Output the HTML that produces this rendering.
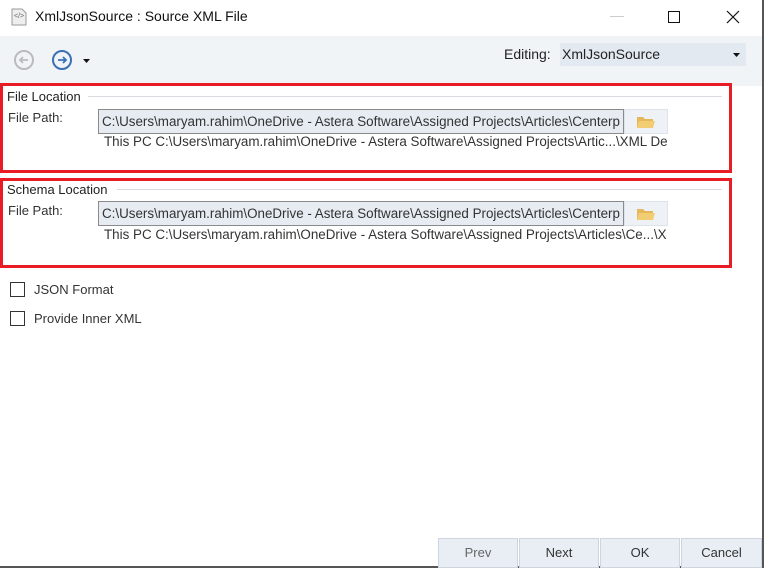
<!DOCTYPE html>
<html><head><style>
*{margin:0;padding:0;box-sizing:border-box}
body{width:764px;height:568px;background:#fff;font-family:"Liberation Sans",sans-serif;font-size:12px;color:#222;position:relative;overflow:hidden}
.a{position:absolute}
.red{position:absolute;border:3px solid #e81c24}
.tb{position:absolute;left:98px;width:526px;height:25px;background:#e6ecf2;border:1px solid #8a8a8a;font-size:13.4px;line-height:23px;padding-left:3px;white-space:nowrap;overflow:hidden;color:#333}
.fb{position:absolute;left:624px;width:44px;height:25px;background:#eef2f6;border:1px solid #dde3ea}
.btn{position:absolute;top:538px;height:30px;width:80px;background:#e8eef4;border:1px solid #cdd5de;text-align:center;line-height:28px;font-size:13px;color:#333}
.cb{position:absolute;left:10px;width:15px;height:15px;border:1px solid #333;background:#fff}
.grp{position:absolute;height:1px;background:#d8dce0}
.sub{position:absolute;left:104px;font-size:13.4px;color:#333;white-space:nowrap}
</style></head><body>
<svg class="a" style="left:11px;top:8px" width="16" height="18"><path d="M1 1h10l4 4v12H1z" fill="#eee" stroke="#999"/><text x="3" y="10" font-size="7" fill="#666">&lt;/&gt;</text></svg>
<div class="a" style="left:35px;top:8px;font-size:14px;color:#111">XmlJsonSource : Source XML File</div>
<div class="a" style="left:610px;top:16px;width:14px;height:1px;background:#ccc"></div>
<div class="a" style="left:668px;top:11px;width:12px;height:12px;border:1px solid #111"></div>
<svg class="a" style="left:726px;top:10px" width="14" height="14"><path d="M1 1L13 13M13 1L1 13" stroke="#111" stroke-width="1.2"/></svg>
<div class="a" style="left:0;top:36px;width:762px;height:50px;background:#f1f4f7"></div>
<svg class="a" style="left:13px;top:49px" width="22" height="22"><circle cx="11" cy="11" r="9" fill="none" stroke="#bbb" stroke-width="2"/><path d="M15 11H7M10 8l-3 3 3 3" fill="none" stroke="#bbb" stroke-width="1.8"/></svg>
<svg class="a" style="left:51px;top:49px" width="22" height="22"><circle cx="11" cy="11" r="9" fill="none" stroke="#3a6fb5" stroke-width="2"/><path d="M7 11h8M12 8l3 3-3 3" fill="none" stroke="#3a6fb5" stroke-width="1.8"/></svg>
<svg class="a" style="left:83px;top:59px" width="7" height="4"><path d="M0 0h7L3.5 4z" fill="#111"/></svg>
<div class="a" style="left:504px;top:46px;font-size:14px;color:#222">Editing:</div>
<div class="a" style="left:560px;top:43px;width:186px;height:23px;background:#e3e9f0"></div>
<div class="a" style="left:562px;top:46px;font-size:14px;color:#222">XmlJsonSource</div>
<svg class="a" style="left:733px;top:53px" width="7" height="4"><path d="M0 0h7L3.5 4z" fill="#111"/></svg>
<div class="a" style="left:762px;top:0;width:2px;height:568px;background:#555"></div>
<div class="a" style="left:0;top:566px;width:764px;height:2px;background:#555"></div>
<div class="grp" style="left:88px;top:96px;width:634px"></div>
<div class="a" style="left:7px;top:89px;font-size:13px;color:#222">File Location</div>
<div class="a" style="left:8px;top:110px;font-size:13px;color:#333">File Path:</div>
<div class="tb" style="top:109px">C:\Users\maryam.rahim\OneDrive - Astera Software\Assigned Projects\Articles\Centerp</div>
<div class="fb" style="top:109px"></div>
<svg class="a" style="left:636px;top:115px" width="20" height="14"><path d="M1 2h6l2 2h8v9H1z" fill="#e6b85c"/><path d="M3 6h16l-2 7H1z" fill="#f3cd74"/></svg>
<div class="sub" style="top:134px">This PC C:\Users\maryam.rahim\OneDrive - Astera Software\Assigned Projects\Artic...\XML De</div>
<div class="red" style="left:0;top:83px;width:732px;height:90px"></div>
<div class="grp" style="left:117px;top:189px;width:605px"></div>
<div class="a" style="left:7px;top:182px;font-size:13px;color:#222">Schema Location</div>
<div class="a" style="left:8px;top:203px;font-size:13px;color:#333">File Path:</div>
<div class="tb" style="top:201px">C:\Users\maryam.rahim\OneDrive - Astera Software\Assigned Projects\Articles\Centerp</div>
<div class="fb" style="top:201px"></div>
<svg class="a" style="left:636px;top:207px" width="20" height="14"><path d="M1 2h6l2 2h8v9H1z" fill="#e6b85c"/><path d="M3 6h16l-2 7H1z" fill="#f3cd74"/></svg>
<div class="sub" style="top:227px">This PC C:\Users\maryam.rahim\OneDrive - Astera Software\Assigned Projects\Articles\Ce...\X</div>
<div class="red" style="left:0;top:178px;width:732px;height:90px"></div>
<div class="cb" style="top:282px"></div>
<div class="a" style="left:34px;top:282px;font-size:13px;color:#333">JSON Format</div>
<div class="cb" style="top:311px"></div>
<div class="a" style="left:34px;top:311px;font-size:13px;color:#333">Provide Inner XML</div>
<div class="btn" style="left:438px;color:#666">Prev</div>
<div class="btn" style="left:519px">Next</div>
<div class="btn" style="left:600px">OK</div>
<div class="btn" style="left:681px;width:81px">Cancel</div>
</body></html>
